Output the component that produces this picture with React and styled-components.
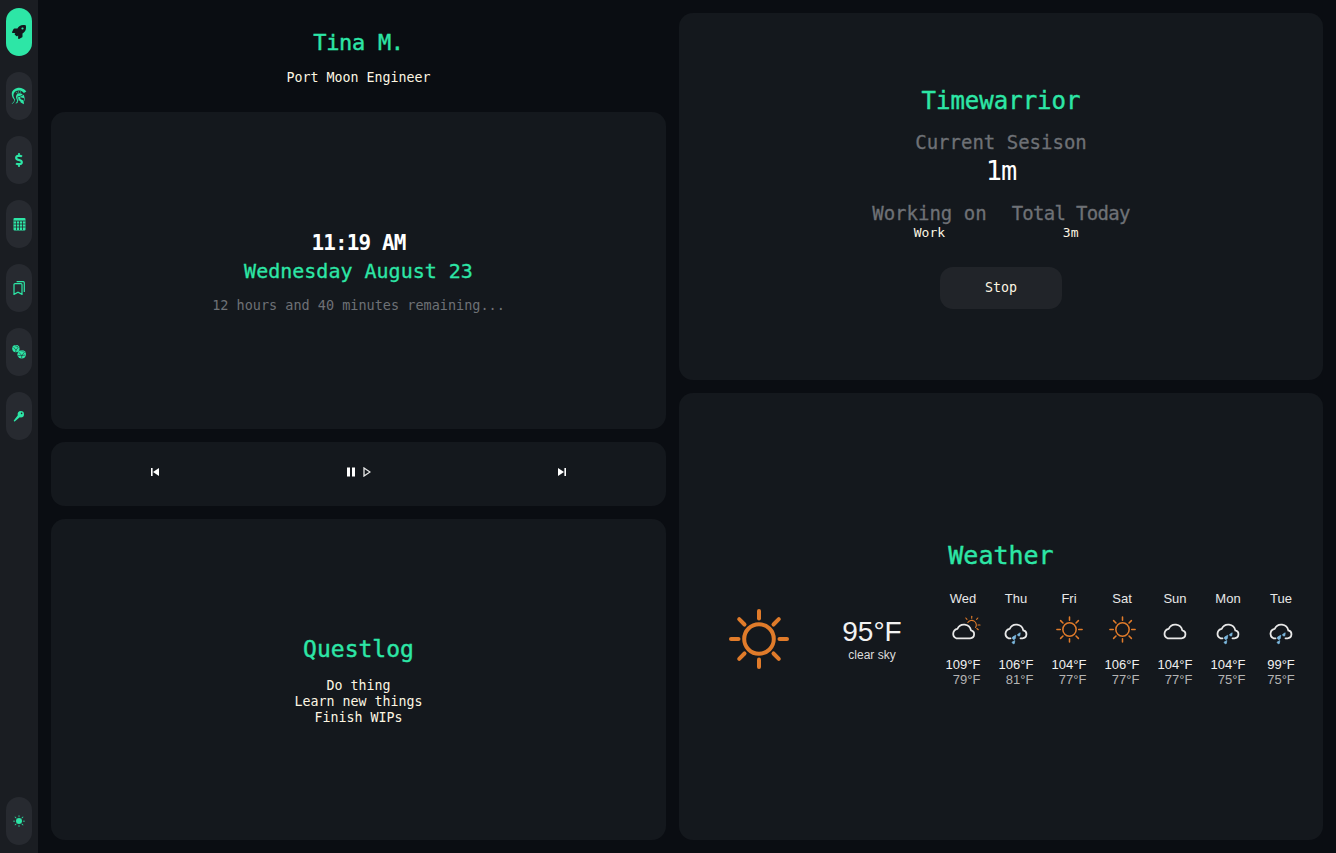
import React from "react";
import styled, { createGlobalStyle } from "styled-components";
import { FaDollarSign, FaRocket } from "react-icons/fa";
import { GiSpartanHelmet } from "react-icons/gi";
import { BsSunFill } from "react-icons/bs";

const Global = createGlobalStyle`
  html, body { margin: 0; padding: 0; background: #0a0d12; }
  * { box-sizing: border-box; }
`;
const accent = "#2de6a6";
const Page = styled.div`
  display: flex; width: 1336px; height: 853px; overflow: hidden; background: #0a0d12;
`;
const Side = styled.nav`
  width: 38px; flex: none; background: #1a1d22; padding: 8px 6px;
  display: flex; flex-direction: column; gap: 16px;
`;
const Pill = styled.button`
  width: 26px; height: 48px; flex: none; border: 0; padding: 0; border-radius: 13px;
  display: flex; align-items: center; justify-content: center;
  background: ${p => (p.$active ? accent : "#272a30")};
  color: ${p => (p.$active ? "#14181d" : accent)};
  font-size: ${p => p.$size || 14}px;
  ${p => p.$bottom && "margin-top: auto;"}
`;
const Main = styled.main`
  flex: 1; padding: 13px; display: grid; gap: 13px;
  grid-template-columns: 615px 644px;
`;
const Column = styled.div`
  display: flex; flex-direction: column; gap: 13px; min-height: 0;
`;
const Header = styled.header`
  height: 86px; flex: none; display: flex; flex-direction: column; align-items: center;
`;
const Card = styled.section`
  background: #14181d; border-radius: 14px; height: ${p => p.$h}px; flex: none;
  display: flex; flex-direction: column; align-items: center; justify-content: center;
  padding-bottom: ${p => p.$pb || 0}px;
`;
const Pix = styled.div`
  font-family: "DejaVu Sans Mono", monospace;
  font-size: ${p => p.$s}px;
  letter-spacing: ${p => p.$ls || 0}px;
  line-height: ${p => p.$lh || Math.round(p.$s * 1.2)}px;
  font-weight: ${p => (p.$b ? 700 : 400)};
  color: ${p => p.$c || "#fdf6e3"};
  white-space: nowrap;
  text-align: center;
  margin: ${p => p.$m || "0"};
  ${p => p.$heavy && `-webkit-text-stroke: ${p.$heavy}px currentColor;`}
`;
const Player = styled.section`
  background: #14181d; border-radius: 14px; height: 64px; flex: none;
  display: flex; justify-content: space-between; align-items: center;
  padding: 0 99px 4px;
`;
const Control = styled.span`
  display: flex; align-items: center; gap: 7px; color: #fff;
`;
const TwoCols = styled.div`
  display: flex; gap: 25px; margin-top: 14px;
`;
const Col = styled.div`
  display: flex; flex-direction: column; align-items: center;
`;
const StopButton = styled.button`
  width: 122px; height: 42px; border: 0; border-radius: 13px; background: #212429;
  margin-top: 26px; padding: 0; display: flex; align-items: center; justify-content: center;
`;
const WeatherRow = styled.div`
  align-self: stretch; display: flex; align-items: center; padding-left: 50px; margin-top: 20px;
`;
const Now = styled.div`
  width: 120px; margin-left: 23px; margin-right: 4.5px;
  display: flex; flex-direction: column; align-items: center;
  font-family: "Liberation Sans", sans-serif;
`;
const Temp = styled.div`
  font-size: 28px; line-height: 32px; color: #f2f2f2;
`;
const Desc = styled.div`
  font-size: 12px; line-height: 14px; color: #dcdcdc;
`;
const Forecast = styled.div`
  display: grid; grid-template-columns: repeat(7, 53px);
  font-family: "Liberation Sans", sans-serif; font-size: 13px; line-height: 15px;
`;
const Day = styled.div`
  display: flex; flex-direction: column; align-items: center; color: #e8e8e8;
`;
const DayIcon = styled.div`
  height: 28px; margin: 10px 0 13px; display: flex; align-items: center; justify-content: center;
  svg { overflow: visible; }
`;
const Temps = styled.div`
  display: flex; flex-direction: column; align-items: flex-end;
  white-space: nowrap;
`;
const High = styled.span`color: #f0f0f0;`;
const Low = styled.span`color: #b4b4b4;`;

const O = "#e07b2a";
const rays = [0, 45, 90, 135, 180, 225, 270, 315];
const SunIcon = ({ size = 27, sw = 3.4 }) => (
  <svg width={size} height={size} viewBox="0 0 60 60" fill="none" stroke={O} strokeLinecap="round">
    <circle cx="30" cy="30" r="14.8" strokeWidth={sw} />
    {rays.map(a => (
      <line key={a} x1="30" y1="9.5" x2="30" y2="2" strokeWidth={sw} transform={`rotate(${a} 30 30)`} />
    ))}
  </svg>
);
const Cloud = () => (
  <svg width="32" height="28" viewBox="0 0 32 28" fill="none" stroke="#e8e8e8" strokeWidth="1.8" strokeLinejoin="round">
    <path d="M8.5 22.3 h14 a4 4 0 0 0 .8 -7.9 a7.2 7.2 0 0 0 -13.6 -1.6 a5 5 0 0 0 -1.2 9.5 z" />
  </svg>
);
const RainCloud = () => (
  <svg width="32" height="28" viewBox="0 0 32 28" fill="none">
    <path d="M10.5 22.3 H8.5 a5 5 0 0 1 1.2 -9.5 a7.2 7.2 0 0 1 13.6 1.6 a4 4 0 0 1 -.8 7.9 H20.5"
      stroke="#e8e8e8" strokeWidth="1.8" strokeLinecap="round" />
    <g fill="#7db9e0" stroke="#7db9e0" strokeWidth="0.7" strokeLinejoin="round">
      <path d="M12.6 21 L15.8 19.2 L15.2 22.8 A1.5 1.5 0 0 1 12.6 21 z" />
      <path d="M17.6 18.4 L20.2 16.8 L19.8 19.8 A1.4 1.4 0 0 1 17.6 18.4 z" />
      <path d="M12.2 26 L14.8 24.6 L14.4 27.4 A1.4 1.4 0 0 1 12.2 26 z" />
    </g>
  </svg>
);
const CloudSun = () => (
  <svg width="32" height="28" viewBox="0 0 32 28" fill="none">
    <g stroke={O} strokeWidth="1.1" strokeLinecap="round">
      <path d="M20.8 6.5 a4.6 4.6 0 0 1 7.8 5" />
      <line x1="24.7" y1="0.3" x2="24.7" y2="2.2" />
      <line x1="18.8" y1="2" x2="20" y2="3.4" />
      <line x1="30.8" y1="2" x2="29.6" y2="3.4" />
      <line x1="31" y1="9" x2="33" y2="9" />
      <line x1="29.8" y1="12.5" x2="31.3" y2="13.7" />
    </g>
    <path d="M9.2 22.3 h14 a4 4 0 0 0 .8 -7.9 a7.2 7.2 0 0 0 -13.6 -1.6 a5 5 0 0 0 -1.2 9.5 z"
      stroke="#e8e8e8" strokeWidth="1.8" strokeLinejoin="round" />
  </svg>
);
const CalendarIcon = () => (
  <svg width="13" height="14" viewBox="0 0 13 14">
    <rect x="0.5" y="1" width="12" height="12.5" rx="1" fill={accent} />
    <g stroke="#272a30" strokeWidth="0.8">
      <line x1="0.5" y1="4" x2="12.5" y2="4" />
      <line x1="0.5" y1="7" x2="12.5" y2="7" />
      <line x1="0.5" y1="10" x2="12.5" y2="10" />
      <line x1="3.5" y1="4" x2="3.5" y2="13" />
      <line x1="6.5" y1="4" x2="6.5" y2="13" />
      <line x1="9.5" y1="4" x2="9.5" y2="13" />
    </g>
  </svg>
);
const BookmarksIcon = () => (
  <svg width="12" height="14" viewBox="0 0 12 14" fill="none" stroke={accent} strokeWidth="1.2">
    <path d="M1 13.4 V3.6 a1 1 0 0 1 1 -1 h6 a1 1 0 0 1 1 1 V13.4 L5 11.2 z" />
    <path d="M3.6 0.7 h6.7 a1 1 0 0 1 1 1 V11" />
  </svg>
);
const DiceIcon = () => (
  <svg width="14" height="14" viewBox="0 0 14 14">
    <circle cx="3.9" cy="3.5" r="3.7" fill={accent} />
    <circle cx="9.7" cy="9.2" r="4.3" fill={accent} />
    <g stroke="#272a30" strokeWidth="0.6" fill="none">
      <path d="M1.6 2.2 L4 5.2 L6.4 2 M4 5.2 L3.6 7 M2.6 0.6 L6 1.6" />
      <path d="M7 7.4 L9.8 10.6 L12.6 7 M9.8 10.6 L9.6 13.2 M8.2 5.6 L11.8 6.2 M6 10.6 L9.8 10.6 L13.4 10" />
    </g>
  </svg>
);
const KeyIcon = () => (
  <svg width="12" height="12" viewBox="0 0 12 12" fill={accent}>
    <path d="M7.8 1 a3.2 3.2 0 0 1 0 6.4 a3.2 3.2 0 0 1 -1 -.15 L2 11.2 a0.7 0.7 0 0 1 -1 -1 L4.8 5.3 A3.2 3.2 0 0 1 7.8 1 z" />
    <circle cx="8.6" cy="3.4" r="0.8" fill="#272a30" />
  </svg>
);

const days = [
  ["Wed", <CloudSun />, "109°F", "79°F"],
  ["Thu", <RainCloud />, "106°F", "81°F"],
  ["Fri", <SunIcon />, "104°F", "77°F"],
  ["Sat", <SunIcon />, "106°F", "77°F"],
  ["Sun", <Cloud />, "104°F", "77°F"],
  ["Mon", <RainCloud />, "104°F", "75°F"],
  ["Tue", <RainCloud />, "99°F", "75°F"],
];

const Skip = ({ flip }) => (
  <svg width="10" height="10" viewBox="0 0 10 10" fill="#fff" style={flip ? { transform: "scaleX(-1)" } : undefined}>
    <rect x="1" y="1" width="1.6" height="8" />
    <path d="M9 1 v8 L3 5 z" />
  </svg>
);
const Pause = () => (
  <svg width="10" height="10" viewBox="0 0 10 10" fill="#fff">
    <rect x="1" y="0.5" width="3" height="9" />
    <rect x="6" y="0.5" width="3" height="9" />
  </svg>
);
const Play = () => (
  <svg width="8" height="10" viewBox="0 0 8 10" fill="none" stroke="#e8e8e8" strokeWidth="1.3">
    <path d="M1 1 L7 5 L1 9 z" />
  </svg>
);

export default function App() {
  return (
    <Page>
      <Global />
      <Side>
        <Pill $active $size={14}><FaRocket /></Pill>
        <Pill $size={18}><GiSpartanHelmet /></Pill>
        <Pill $size={14}><FaDollarSign /></Pill>
        <Pill><CalendarIcon /></Pill>
        <Pill><BookmarksIcon /></Pill>
        <Pill><DiceIcon /></Pill>
        <Pill><KeyIcon /></Pill>
        <Pill $bottom $size={12}><BsSunFill /></Pill>
      </Side>
      <Main>
        <Column>
          <Header>
            <Pix $s={22} $ls={-0.3} $lh={26} $c={accent} $heavy={0.4} $m="17px 0 0">Tina M.</Pix>
            <Pix $s={13.3} $lh={16} $m="14px 0 0">Port Moon Engineer</Pix>
          </Header>
          <Card $h={317}>
            <Pix $s={21} $ls={-0.9} $lh={26} $b $c="#ffffff" $m="2px 0 0">11:19 AM</Pix>
            <Pix $s={20} $lh={24} $c={accent} $heavy={0.3} $m="3px 0 0">Wednesday August 23</Pix>
            <Pix $s={13.5} $lh={16} $c="#6e7176" $m="14px 0 0">12 hours and 40 minutes remaining...</Pix>
          </Card>
          <Player>
            <Control><Skip /></Control>
            <Control><Pause /><Play /></Control>
            <Control><Skip flip /></Control>
          </Player>
          <Card $h={321}>
            <Pix $s={23} $lh={28} $c={accent} $heavy={0.4} $m="2px 0 0">Questlog</Pix>
            <Pix $s={13.3} $lh={16} $m="15px 0 0">Do thing</Pix>
            <Pix $s={13.3} $lh={16}>Learn new things</Pix>
            <Pix $s={13.3} $lh={16}>Finish WIPs</Pix>
          </Card>
        </Column>
        <Column>
          <Card $h={367}>
            <Pix $s={24} $lh={28} $c={accent} $heavy={0.4} $m="3px 0 0">Timewarrior</Pix>
            <Pix $s={19} $lh={24} $c="#6e7176" $heavy={0.3} $m="15px 0 0">Current Sesison</Pix>
            <Pix $s={27} $ls={-1} $lh={32} $c="#ffffff" $m="1px 0 0">1m</Pix>
            <TwoCols>
              <Col>
                <Pix $s={19} $lh={24} $c="#6e7176" $heavy={0.3}>Working on</Pix>
                <Pix $s={13} $lh={16}>Work</Pix>
              </Col>
              <Col>
                <Pix $s={19} $ls={-0.7} $lh={24} $c="#6e7176" $heavy={0.3}>Total Today</Pix>
                <Pix $s={13} $lh={16}>3m</Pix>
              </Col>
            </TwoCols>
            <StopButton><Pix $s={13.3} $lh={16}>Stop</Pix></StopButton>
          </Card>
          <Card $h={447} $pb={6}>
            <Pix $s={25} $lh={30} $c={accent} $heavy={0.4}>Weather</Pix>
            <WeatherRow>
              <SunIcon size={60} sw={4} />
              <Now>
                <Temp>95°F</Temp>
                <Desc>clear sky</Desc>
              </Now>
              <Forecast>
                {days.map(([d, icon, hi, lo]) => (
                  <Day key={d}>
                    <span>{d}</span>
                    <DayIcon>{icon}</DayIcon>
                    <Temps><High>{hi}</High><Low>{lo}</Low></Temps>
                  </Day>
                ))}
              </Forecast>
            </WeatherRow>
          </Card>
        </Column>
      </Main>
    </Page>
  );
}
